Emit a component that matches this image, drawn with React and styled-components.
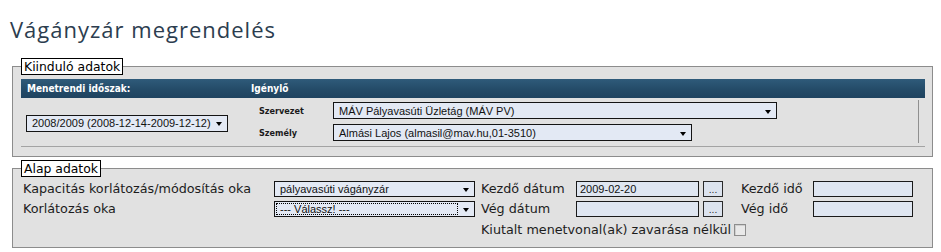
import React from "react";
import styled, { createGlobalStyle } from "styled-components";

const Global = createGlobalStyle`
  html, body { margin: 0; padding: 0; background: #fff; }
  body { font-family: "DejaVu Sans", Verdana, sans-serif; }
`;

const Page = styled.div`
  width: 941px;
  padding-bottom: 2px;
`;

const Title = styled.h1`
  margin: 0;
  padding: 15px 0 0 10px;
  height: 45px;
  box-sizing: border-box;
  font-family: "Open Sans", "DejaVu Sans", sans-serif;
  font-weight: 400;
  font-size: 22px;
  line-height: 28px;
  color: #2c3d4f;
  letter-spacing: 1px;
`;

const Fieldset = styled.fieldset`
  margin: ${(p) => p.$mt}px 8px 0 12px;
  padding: ${(p) => p.$pt}px 7px ${(p) => p.$pb}px 8px;
  border: 1px solid #8c8c8c;
  background: #e1e1e1;
  min-width: 0;
`;

const Legend = styled.legend`
  padding: 0 2px;
  border: 1px solid #000;
  background: #fff;
  color: #000;
  font-family: "DejaVu Sans", Verdana, sans-serif;
  font-size: 12.4px;
  line-height: 15px;
`;

const HeaderBar = styled.div`
  display: grid;
  grid-template-columns: 224px 1fr;
  height: 19px;
  align-items: center;
  background: linear-gradient(#2f5b7a, #244b68 55%, #1f4360);
  color: #fff;
  font-family: "DejaVu Sans Condensed", "DejaVu Sans", sans-serif;
  font-weight: bold;
  font-size: 10px;
`;

const HeaderCell = styled.div`
  padding-left: 6px;
`;

const ContentRow = styled.div`
  display: grid;
  grid-template-columns: 224px 1fr;
  height: 48px;
  border-bottom: 1px solid #a3a3a3;
`;

const LeftCell = styled.div`
  display: flex;
  align-items: center;
  padding: 2px 0 0 5px;
`;

const RightCell = styled.div`
  margin: 2px 6px 0 0;
  height: 43px;
  box-sizing: border-box;
  padding-top: 2px;
  border-right: 1px solid #8f8f8f;
  display: grid;
  grid-template-columns: 88px 1fr;
  grid-auto-rows: 17px;
  row-gap: 5px;
  align-items: center;
`;

const SmallLabel = styled.div`
  padding-left: 14px;
  font-family: "DejaVu Sans Condensed", "DejaVu Sans", sans-serif;
  font-weight: bold;
  font-size: 9px;
  color: #1b1b1b;
`;

const SelectBox = styled.div`
  position: relative;
  box-sizing: border-box;
  width: ${(p) => p.$w}px;
  height: ${(p) => p.$h || 16}px;
  border: 1px solid #141414;
  background: #e3e9f4;
  font-family: "Liberation Sans", Arial, sans-serif;
  font-size: 11px;
  color: #111;
  display: flex;
  align-items: center;
  padding: 0 12px 0 5px;
  white-space: nowrap;
  overflow: hidden;
`;

const Arrow = styled.span`
  position: absolute;
  right: 5px;
  top: 50%;
  margin-top: -1px;
  width: 0;
  height: 0;
  border-left: 3.5px solid transparent;
  border-right: 3.5px solid transparent;
  border-top: 4px solid #000;
`;

const FocusRing = styled.span`
  position: absolute;
  left: 1px;
  top: 1px;
  bottom: 1px;
  right: 16px;
  border: 1px dotted #000;
  pointer-events: none;
`;

const FormGrid = styled.div`
  margin-left: 2px;
  display: grid;
  grid-template-columns: 251px 207px 95px 127px 38px 72px 100px;
  grid-template-rows: 20px 20px 18px;
  align-items: start;
`;

const Label = styled.div`
  font-family: "DejaVu Sans", Verdana, sans-serif;
  font-size: 12.75px;
  line-height: 16px;
  color: #1c1c1c;
  white-space: nowrap;
`;

const TextInput = styled.div`
  box-sizing: border-box;
  width: ${(p) => p.$w}px;
  height: 16px;
  border: 1px solid #1a1a1a;
  background: #dfe6f1;
  font-family: "Liberation Sans", Arial, sans-serif;
  font-size: 11px;
  line-height: 14px;
  padding-left: 3px;
  color: #111;
`;

const DotsButton = styled.div`
  box-sizing: border-box;
  width: 20px;
  height: 16px;
  border: 1px solid #2a2a2a;
  background: #dce3ee;
  font-family: "DejaVu Sans", sans-serif;
  font-size: 9px;
  line-height: 16px;
  text-align: center;
  color: #222;
`;

const CheckRow = styled.div`
  grid-column: 3 / -1;
  display: flex;
  align-items: center;
  gap: 3px;
  height: 18px;
`;

const Checkbox = styled.span`
  box-sizing: border-box;
  width: 12px;
  height: 12px;
  border: 1px solid #8d8d8d;
  background: #e9e9e9;
  box-shadow: inset 1px 1px 0 #cfcfcf;
`;

export default function App() {
  return (
    <Page>
      <Global />
      <Title>Vágányzár megrendelés</Title>

      <Fieldset $mt={13} $pt={4} $pb={9}>
        <Legend>Kiinduló adatok</Legend>
        <HeaderBar>
          <HeaderCell>Menetrendi időszak:</HeaderCell>
          <HeaderCell>Igénylő</HeaderCell>
        </HeaderBar>
        <ContentRow>
          <LeftCell>
            <SelectBox $w={202} $h={17}>
              2008/2009 (2008-12-14-2009-12-12)
              <Arrow />
            </SelectBox>
          </LeftCell>
          <RightCell>
            <SmallLabel>Szervezet</SmallLabel>
            <SelectBox $w={444} $h={17}>
              MÁV Pályavasúti Üzletág (MÁV PV)
              <Arrow />
            </SelectBox>
            <SmallLabel>Személy</SmallLabel>
            <SelectBox $w={359} $h={17}>
              Almási Lajos (almasil@mav.hu,01-3510)
              <Arrow />
            </SelectBox>
          </RightCell>
        </ContentRow>
      </Fieldset>

      <Fieldset $mt={3} $pt={4} $pb={8}>
        <Legend>Alap adatok</Legend>
        <FormGrid>
          <Label>Kapacitás korlátozás/módosítás oka</Label>
          <SelectBox $w={201}>
            pályavasúti vágányzár
            <Arrow />
          </SelectBox>
          <Label>Kezdő dátum</Label>
          <TextInput $w={123}>2009-02-20</TextInput>
          <DotsButton>...</DotsButton>
          <Label>Kezdő idő</Label>
          <TextInput $w={100} />

          <Label>Korlátozás oka</Label>
          <SelectBox $w={201}>
            --- Válassz! ---
            <FocusRing />
            <Arrow />
          </SelectBox>
          <Label>Vég dátum</Label>
          <TextInput $w={123} />
          <DotsButton>...</DotsButton>
          <Label>Vég idő</Label>
          <TextInput $w={100} />

          <div />
          <div />
          <CheckRow>
            <Label>Kiutalt menetvonal(ak) zavarása nélkül</Label>
            <Checkbox />
          </CheckRow>
        </FormGrid>
      </Fieldset>
    </Page>
  );
}
